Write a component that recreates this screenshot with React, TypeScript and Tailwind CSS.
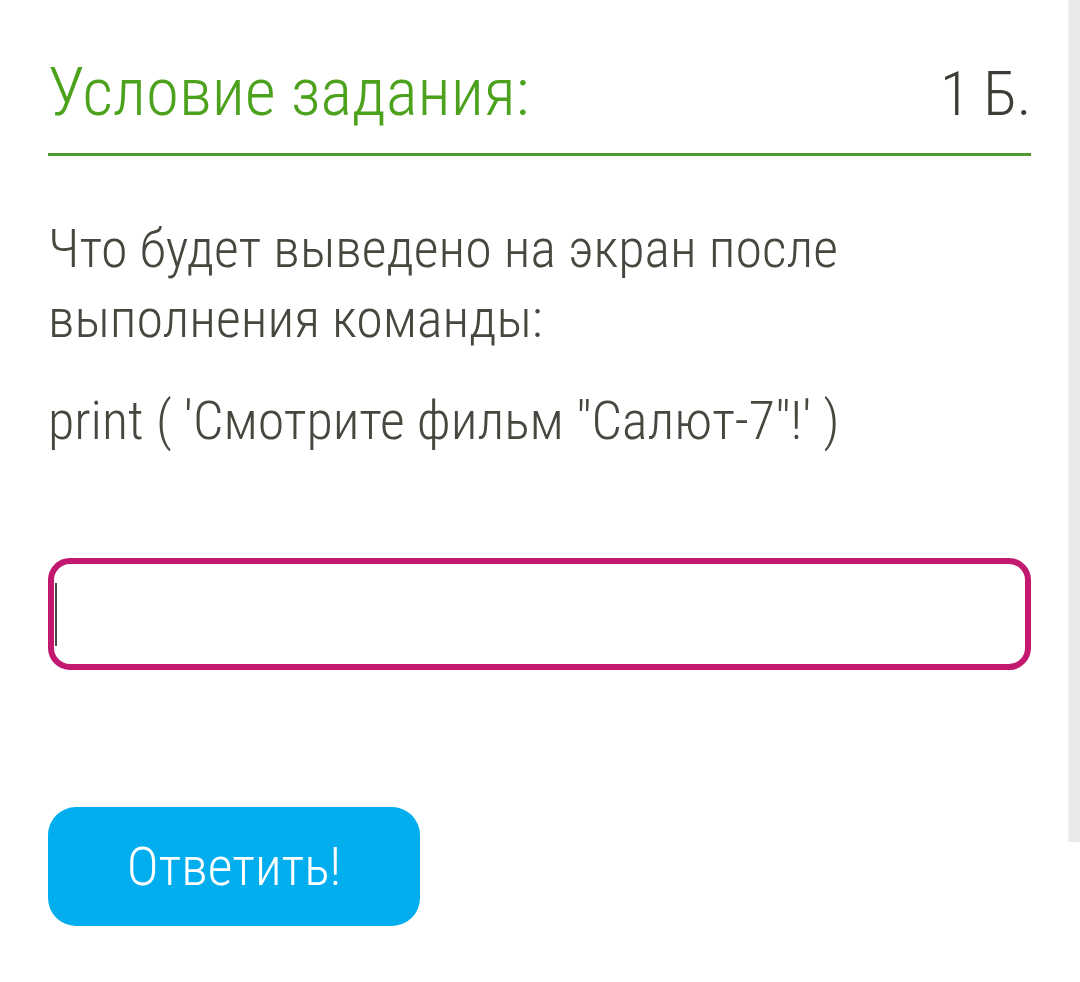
import React from 'react';

const font = { fontFamily: '"Roboto Condensed", Roboto, "Noto Sans", sans-serif' };

export default function App() {
  return (
    <div className="flex w-[1080px] min-h-[982px] bg-white" style={font}>
      <div className="flex-1 pl-[48px] pr-[37px] pt-[58px]">
        {/* Header */}
        <div className="flex items-baseline justify-between border-b-[3px] border-[#4f9a2c] pb-[25px]">
          <h2 className="text-[67px] leading-[68px] font-light font-stretch-condensed text-[#4ca21d]">
            Условие задания:
          </h2>
          <span className="text-[62px] leading-[68px] font-light font-stretch-condensed text-[#3d3d37] tracking-[-0.5px]">1 Б.</span>
        </div>

        {/* Question */}
        <div className="mt-[58px] text-[54px] leading-[70px] font-light font-stretch-condensed text-[#47473f]">
          <p>Что будет выведено на экран после выполнения команды:</p>
          <p className="mt-[32px]">print ( 'Смотрите фильм "Салют-7"!' )</p>
        </div>

        {/* Answer input */}
        <div className="mt-[102px] h-[112px] rounded-[22px] border-[6px] border-[#c2186f] flex items-center pl-[1px]">
          <div className="w-[2px] h-[63px] bg-[#4a4a44]" />
        </div>

        {/* Submit */}
        <button className="mt-[137px] w-[372px] h-[119px] rounded-[28px] bg-[#03aeef] text-white text-[54px] font-light font-stretch-condensed flex items-center justify-center">
          Ответить!
        </button>
      </div>
      <div className="w-[12px] h-[842px] bg-[#e9e9e9] border-l border-[#f4f4f4]" />
    </div>
  );
}
